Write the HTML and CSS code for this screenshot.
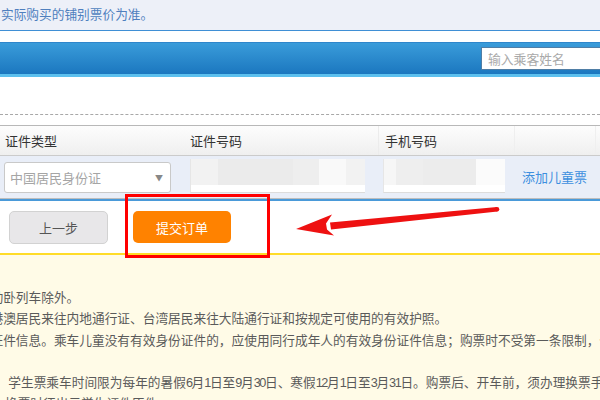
FILE: index.html
```
<!DOCTYPE html>
<html lang="zh-CN">
<head>
<meta charset="utf-8">
<title>提交订单</title>
<link rel="stylesheet" href="styles.css">
</head>
<body>
<div class="page">
  <div class="topnote">实际购买的铺别票价为准。</div>
  <div class="bar">
    <input class="search" type="text" placeholder="输入乘客姓名">
  </div>
  <div class="blank"></div>
  <div class="table">
    <div class="thead">
      <div class="c1">证件类型</div>
      <div class="c2">证件号码</div>
      <div class="c3">手机号码</div>
      <div class="c4"></div>
    </div>
    <div class="trow">
      <div class="select"><span>中国居民身份证</span><span class="caret">▼</span></div>
      <div class="redact r1"></div>
      <div class="redact r2"></div>
      <a class="addchild">添加儿童票</a>
    </div>
  </div>
  <div class="actions">
    <button class="btn prev">上一步</button>
    <button class="btn submit">提交订单</button>
  </div>
  <div class="notes">
    <div class="line">动卧列车除外。</div>
    <div class="line l2">港澳居民来往内地通行证、台湾居民来往大陆通行证和按规定可使用的有效护照。</div>
    <div class="line">证件信息。乘车儿童没有有效身份证件的，应使用同行成年人的有效身份证件信息；购票时不受第一条限制，但购票后、开车前须办理换票手续。</div>
    <div class="line empty"></div>
    <div class="line l5">学生票乘车时间限为每年的暑假<span class="num">6</span>月<span class="num">1</span>日至<span class="num">9</span>月<span class="num">30</span>日、寒假<span class="num">12</span>月<span class="num">1</span>日至<span class="num">3</span>月<span class="num">31</span>日。购票后、开车前，须办理换票手续方可进站乘车。</div>
    <div class="line l6">换票时须出示学生证件原件。</div>
  </div>
  <div class="highlight"></div>
  <svg class="arrow" width="212" height="44" viewBox="0 0 212 44" aria-hidden="true">
    <polygon points="207,9 207.5,13.5 41,31.5 40,24.5" fill="#ee1111"/>
    <circle cx="207" cy="11.2" r="2.3" fill="#ee1111"/>
    <polygon points="6,31 42,16.5 36,25.5 37,31.5 44,37.5" fill="#ee1111"/>
  </svg>
</div>
</body>
</html>
```
FILE: styles.css
```
* { box-sizing: border-box; }
body {
  margin: 0;
  width: 600px;
  height: 400px;
  overflow: hidden;
  background: #fff;
  font-family: "Noto Sans CJK SC", sans-serif;
  font-size: 13px;
}
.page {
  position: relative;
  width: 600px;
  height: 400px;
  overflow: hidden;
}
.topnote {
  height: 31px;
  background: #edf0f8;
  border-bottom: 1px solid #3f8fd5;
  color: #4f7fbe;
  font-size: 12.7px;
  line-height: 27px;
  padding-left: 1px;
  white-space: nowrap;
}
.bar {
  margin-top: 11px;
  height: 35px;
  border-top: 1px solid #2f86cb;
  border-bottom: 3px solid #5cc0ee;
  background: linear-gradient(#3a9cda, #1b77bf);
  display: flex;
  justify-content: flex-end;
  align-items: flex-start;
  padding-top: 4px;
  overflow: hidden;
}
.search {
  width: 125px;
  height: 23px;
  margin-right: -6px;
  border: 1px solid #4f7ea6;
  border-right: none;
  padding: 0 6px;
  font: 12.8px "Noto Sans CJK SC", sans-serif;
  background: #fff;
  outline: none;
}
.search::placeholder { color: #a9a9a9; }
.blank {
  height: 38px;
  border-bottom: 1px dashed #a8a8a8;
}
.table { margin-top: 10px; }
.thead {
  display: flex;
  height: 31px;
  border-top: 1px solid #b8b8b8;
  border-bottom: 1px solid #cbcbcb;
  background: linear-gradient(#fdfdfd, #efefef);
  color: #333;
  line-height: 29px;
}
.c1 { width: 185px; padding-left: 5px; }
.c2 { width: 194px; padding-left: 5px; border-right: 1px solid #ececec; }
.c3 { width: 136px; padding-left: 6px; border-right: 1px solid #efefef; }
.c4 { width: 81px; border-right: 1px solid #efefef; }
.trow {
  display: flex;
  align-items: flex-start;
  height: 43px;
  background: #e9eef8;
  border-bottom: 1px solid #bdbdbd;
  padding-top: 6px;
}
.select {
  margin-left: 4px;
  width: 167px;
  height: 31px;
  background: #fff;
  border: 1px solid #c9c9c9;
  border-radius: 3px;
  display: flex;
  align-items: center;
  justify-content: space-between;
  padding: 0 7px 0 5px;
  color: #a5a5a5;
}
.caret { font-size: 8px; color: #888; }
.redact {
  margin-top: -3px;
  height: 34px;
  background-color: #fff;
  border-left: 1px solid #e6e6e6;
  border-bottom: 1px solid #dcdcdc;
  background-repeat: no-repeat;
  background-size: 100% 26px;
}
.r1 {
  margin-left: 19px;
  width: 175px;
  background-image: linear-gradient(to right, #f2f2f2 0 27px, #ebebeb 27px 102px, #eeeeee 102px 128px, #f9f9f9 128px 155px, #f2f2f2 155px);
}
.r2 {
  margin-left: 18px;
  width: 122px;
  background-image: linear-gradient(to right, #f6f6f6 0 12px, #eeeeee 12px 39px, #ececec 39px 92px, #fbfbfb 92px);
}
.addchild {
  margin-left: 17px;
  line-height: 30px;
  color: #3d8fdf;
  white-space: nowrap;
}
.actions {
  height: 56px;
  border-top: 2px solid #4a9ad9;
  border-bottom: 2px solid #ffdc28;
  padding: 10px 0 0 9px;
  display: flex;
  align-items: flex-start;
  gap: 25px;
}
.btn {
  height: 33px;
  border-radius: 5px;
  font: 13px "Noto Sans CJK SC", sans-serif;
  padding: 0;
}
.prev {
  width: 99px;
  background: #e8e7e9;
  border: 1px solid #d2d2d2;
  color: #555;
}
.submit {
  width: 98px;
  height: 32px;
  background: #ff8200;
  border: none;
  color: #fff;
}
.notes {
  height: 146px;
  margin-left: -9.5px;
  padding-top: 31px;
  background: #fffbe7;
  color: #5a5a5a;
  font-size: 12.7px;
  line-height: 21.3px;
}
.line { white-space: nowrap; height: 21.3px; }
.l2 { padding-left: 0; }
.l5 { padding-left: 17.8px; }
.l6 { padding-left: 14.5px; }
.num { font-family: "Liberation Sans", sans-serif; letter-spacing: -1.4px; }
.highlight {
  position: absolute;
  left: 125px;
  top: 194px;
  width: 145px;
  height: 64px;
  border: 3px solid #f00;
}
.arrow {
  position: absolute;
  left: 290px;
  top: 198px;
}
```
